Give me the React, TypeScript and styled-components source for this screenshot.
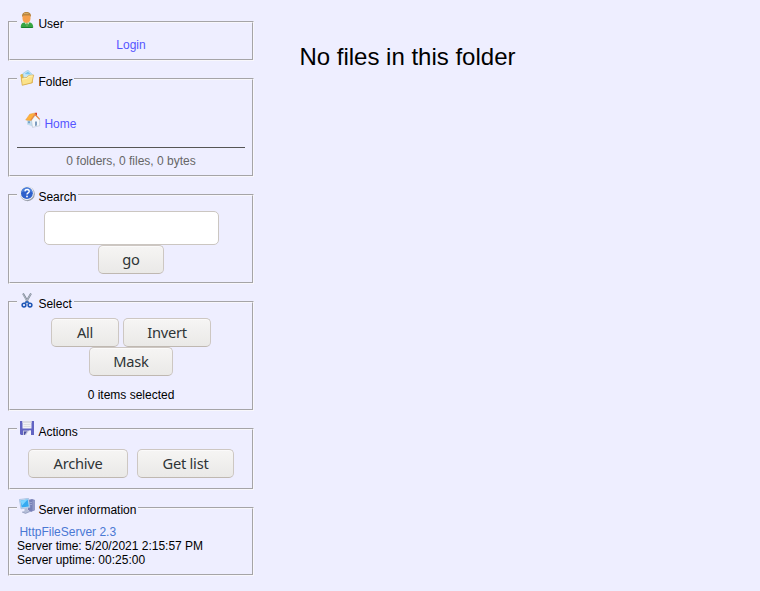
import React from "react";
import styled, { createGlobalStyle } from "styled-components";

const GlobalStyle = createGlobalStyle`
  * { box-sizing: border-box; }
  body {
    margin: 0;
    background: #eeeeff;
    color: #000;
    font: 12px/14px "Liberation Sans", Arial, sans-serif;
  }
`;

const Page = styled.div`
  display: flex;
  height: 591px;
`;

const Sidebar = styled.aside`
  display: flex;
  flex-direction: column;
  gap: 8px;
  width: 246px;
  margin: 12px 45.400px 0 8px;
  flex: none;
`;

const Panel = styled.fieldset<{ $height: number }>`
  height: ${(p) => p.$height}px;
  width: 246px;
  min-width: 0;
  margin: 0;
  padding: 0 7px;
  border: 2px groove #f8f7fb;
`;

const Legend = styled.legend<{ $drop?: number }>`
  display: flex;
  gap: 3.400px;
  height: 20px;
  padding: 0 2px;
  white-space: nowrap;

  svg { display: block; flex: none; }
  span { padding-top: ${(p) => 5 + (p.$drop ?? 0)}px; }
`;

const IconSlot = styled.i<{ $top?: number }>`
  width: 16px;
  height: 16px;
  margin-top: ${(p) => p.$top ?? 0}px;
`;

const Body = styled.div<{ $top: number }>`
  display: flex;
  flex-direction: column;
  align-items: center;
  padding-top: ${(p) => p.$top}px;
`;

const Link = styled.a`
  color: #5555ff;
  text-decoration: none;
`;

const ServerLink = styled(Link)`
  color: #4a78d4;
  padding-left: 2.400px;
`;

const HomeRow = styled.div`
  display: flex;
  align-self: stretch;
  gap: 3.400px;
  height: 35px;
  padding-left: 8px;

  a { padding-top: 5px; }
`;

const Divider = styled.hr`
  width: 100%;
  height: 1px;
  margin: 0 0 6px;
  border: 0;
  background: #555;
`;

const Counts = styled.div`
  color: #666;
`;

const SearchInput = styled.input`
  width: 175px;
  height: 34px;
  padding: 0 8px;
  border: 1px solid #cbc6c1;
  border-radius: 5px;
  background: #fff;
  outline: none;
`;

const Button = styled.button<{ $width: number }>`
  display: flex;
  align-items: center;
  justify-content: center;
  width: ${(p) => p.$width}px;
  height: 29px;
  padding: 0 0 2px;
  border: 1px solid #cdc7c2;
  border-bottom-color: #bfb8b1;
  border-radius: 5px;
  background: linear-gradient(#f6f5f4, #eae9e7);
  box-shadow: inset 0 1px #fbfafa;
  color: #2e3436;
  font: 14.667px/20px "Noto Sans", sans-serif;
  letter-spacing: -0.250px;
`;

const ButtonRow = styled.div<{ $gap: number }>`
  display: flex;
  gap: ${(p) => p.$gap}px;
`;

const Selected = styled.div`
  margin-top: 12px;
`;

const ServerInfo = styled(Body)`
  align-items: flex-start;
`;

const Main = styled.main`
  padding-top: 43px;
  font-size: 24px;
  line-height: 28px;
`;

const Svg = ({ children, x = 0 }: { children: React.ReactNode; x?: number }) => (
  <svg width="16" height="16" viewBox={`${-x} 0 16 16`} aria-hidden="true">
    {children}
  </svg>
);

const UserIcon = () => (
  <Svg x={0.5}>
    <path d="M1.200 15.500c0-3.700 1.800-5 4.300-5.300h4c2.800.4 4.300 2 4.300 5.300z" fill="#35a544" />
    <path d="M1.700 15.500h11.600" stroke="#16802a" />
    <path d="m5 10.200 2.500 4 2.500-4z" fill="#e8f6df" />
    <path d="m6.500 12 1-1.200 1 1.200-.5 3H7z" fill="#54a345" />
    <path d="M3 3h8v3.800C11 9 9.500 11 7 11S3 9 3 6.800z" fill="#f5a04c" />
    <path d="M2.600 5C2.300 1.500 4 .1 7 .1s4.900 1.600 4.500 4.900l-1-1.500H4z" fill="#b78541" />
    <path d="M4.500 1.600h4.500" stroke="#d8ae65" />
  </Svg>
);

const FolderIcon = () => (
  <Svg x={0.7}>
    <path d="M.5 5 2 4h3.500L7 5.500h6V13L3 15.300z" fill="#e5b63f" />
    <path d="m3.200 3.500 5-3.300 4.500 4.300-2 4H4z" fill="#c5e6f7" stroke="#8fc5e2" strokeWidth=".6" />
    <path d="m5 4 3.300-2.500 3 3z" fill="#79c4ed" />
    <path d="m2.500 15.300-1-7 5.500-.8 2-2 5-.5-1.800 7.800z" fill="#fbe28a" stroke="#d2a64a" strokeWidth=".7" />
    <path d="m2.500 9 5-.6 2-2.200 3.500-.3" fill="none" stroke="#fff4bc" />
  </Svg>
);

const HomeIcon = () => (
  <Svg>
    <path d="M10 .8h2v4h-2z" fill="#d53c2a" />
    <path d="M2 7.500 5 4l4 4v7l-7-2.500z" fill="#c3dcee" />
    <path d="m6.500 8 4-4.500L14.700 8v5.700L7.500 15.400z" fill="#f5f8fc" stroke="#b2c1d0" strokeWidth=".6" />
    <path d="M.7 8 4.700 2.200 10 1 5.600 8.400z" fill="#ffb13d" stroke="#e59a38" strokeWidth=".5" />
    <path d="M5.800 8.300 10 2.300l4.700 5" fill="none" stroke="#e88a43" strokeWidth="1.200" />
    <path d="M10 9.500h2v4l-2 .4z" fill="#7f9dc0" />
    <path d="M3 9.300h2v2H3z" fill="#75a4cb" />
  </Svg>
);

const HelpIcon = () => (
  <Svg x={0.5}>
    <circle cx="8" cy="7.900" r="7.300" fill="#979da8" />
    <circle cx="7.300" cy="7.100" r="7.100" fill="#eceef4" />
    <circle cx="7.400" cy="7.200" r="5.900" fill="#2e60cb" />
    <path d="M1.800 6.500a5.700 5.700 0 0 1 11.200 0Q7.800 3.700 1.800 6.500z" fill="#4e80dc" />
    <path d="M5.400 5.400c.2-2.500 4.300-2.400 4.300 0 0 1.500-2.200 1.500-2.200 3.200" fill="none" stroke="#fff" strokeWidth="1.400" />
    <circle cx="7.500" cy="10.500" r=".9" fill="#fff" />
  </Svg>
);

const ScissorsIcon = () => (
  <Svg x={1}>
    <path d="m3 .5 5.500 9.500M11 .5 5.500 10" stroke="#7f8a99" strokeWidth="1.900" />
    <path d="m2.900 1 4.600 7.700M10.700 1 6.700 8" stroke="#c7cdd5" strokeWidth=".7" />
    <circle cx="4" cy="12.100" r="1.900" fill="none" stroke="#1e55b5" strokeWidth="1.500" />
    <circle cx="10" cy="12.100" r="1.900" fill="none" stroke="#1e55b5" strokeWidth="1.500" />
    <path d="m5 10.200 2-1.700 2 1.700" fill="none" stroke="#2b67c4" strokeWidth="1.500" />
  </Svg>
);

const DiskIcon = () => (
  <Svg>
    <path d="M1 0h14v14H2l-1-1z" fill="#6264c3" />
    <path d="M3.500 0h9v7.500h-9z" fill="#f1f1f5" />
    <path d="M3.500 0h9v2h-9z" fill="#dddde4" />
    <path d="M4.500 3.500h7M4.500 5.500h7" stroke="#dcdde2" />
    <path d="M4 9.500h8V14H4z" fill="#c3c5dc" />
    <path d="M5 10.500h3L5.500 14H5z" fill="#4c50a0" />
    <path d="M10 9.500h2V14H7z" fill="#f5f5fb" />
  </Svg>
);

const ServerIcon = () => (
  <Svg>
    <path d="m9 2 4-1 3 1v10l-4 2-3-2z" fill="#7780b7" />
    <path d="m13.500 2.500 2.500-.5v10l-2.500 1z" fill="#9299c6" />
    <path d="M10.500 4.500H13M10.500 6.500H13" stroke="#a9b1d8" strokeWidth=".7" />
    <path d="M.3 1.500 9.500.3 11 9.500 2 10.800z" fill="#c8dcf1" stroke="#93b1d6" strokeWidth=".6" />
    <path d="m1.500 2.500 7.200-1 1.200 7-7.300 1z" fill="#35aaf1" />
    <path d="m1.500 2.500 7.200-1-5.700 6z" fill="#7cd4ff" />
    <path d="m5.500 10.400 3-.4.500 2.500 2 1-4.500 2L3 14l2.500-1.200z" fill="#b4bdd7" />
    <path d="m3 14 3.500 1.400 4.500-1.900" fill="none" stroke="#8994b7" strokeWidth=".7" />
  </Svg>
);

type GroupProps = {
  title: string;
  icon: React.ReactNode;
  height: number;
  iconTop?: number;
  drop?: number;
  children: React.ReactNode;
};

const Group = ({ title, icon, height, iconTop, drop, children }: GroupProps) => (
  <Panel $height={height}>
    <Legend $drop={drop}>
      <IconSlot $top={iconTop}>{icon}</IconSlot>
      <span>{title}</span>
    </Legend>
    {children}
  </Panel>
);

export default function App() {
  return (
    <>
      <GlobalStyle />
      <Page>
        <Sidebar>
          <Group title="User" icon={<UserIcon />} height={49}>
            <Body $top={6}>
              <Link>Login</Link>
            </Body>
          </Group>
          <Group title="Folder" icon={<FolderIcon />} height={108} iconTop={1} drop={1}>
            <Body $top={23}>
              <HomeRow>
                <HomeIcon />
                <Link>Home</Link>
              </HomeRow>
              <Divider />
              <Counts>0 folders, 0 files, 0 bytes</Counts>
            </Body>
          </Group>
          <Group title="Search" icon={<HelpIcon />} height={99} iconTop={1}>
            <Body $top={6}>
              <SearchInput aria-label="Search" />
              <Button $width={66}>go</Button>
            </Body>
          </Group>
          <Group title="Select" icon={<ScissorsIcon />} height={119} iconTop={1}>
            <Body $top={6}>
              <ButtonRow $gap={4}>
                <Button $width={68}>All</Button>
                <Button $width={88}>Invert</Button>
              </ButtonRow>
              <Button $width={84}>Mask</Button>
              <Selected>0 items selected</Selected>
            </Body>
          </Group>
          <Group title="Actions" icon={<DiskIcon />} height={71} iconTop={2} drop={1}>
            <Body $top={10}>
              <ButtonRow $gap={9}>
                <Button $width={100}>Archive</Button>
                <Button $width={97}>Get list</Button>
              </ButtonRow>
            </Body>
          </Group>
          <Group title="Server information" icon={<ServerIcon />} height={78}>
            <ServerInfo $top={7}>
              <ServerLink>HttpFileServer 2.3</ServerLink>
              <div>Server time: 5/20/2021 2:15:57 PM</div>
              <div>Server uptime: 00:25:00</div>
            </ServerInfo>
          </Group>
        </Sidebar>
        <Main>No files in this folder</Main>
      </Page>
    </>
  );
}
